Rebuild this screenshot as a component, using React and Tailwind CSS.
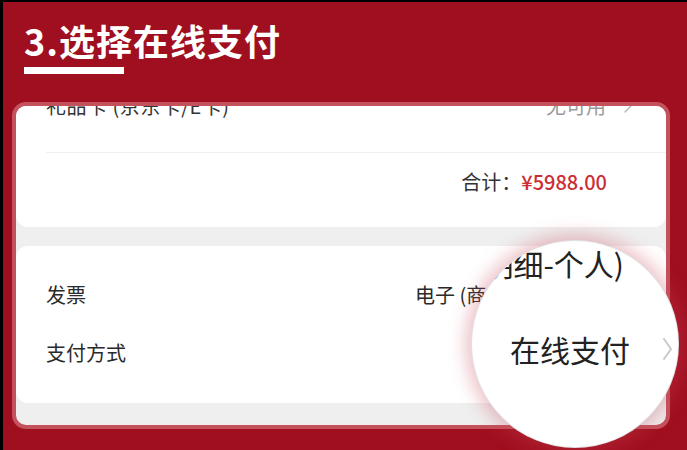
const Chevron = ({ className = '', w = 8, h = 14, color = '#bbbbbb', sw = 1.5 }) => (
    <svg width={w} height={h} viewBox={`0 0 ${w} ${h}`} className={className} fill="none">
        <polyline points={`1,1 ${w - 1},${h / 2} 1,${h - 1}`} stroke={color} strokeWidth={sw} strokeLinecap="round" strokeLinejoin="round" />
    </svg>
);

const App = () => {
    return (
        <div
            className="relative w-[687px] h-[450px] overflow-hidden bg-[#a00f1f] border-t-2 border-l-[3px] border-black"
            style={{ fontFamily: '"Noto Sans CJK SC", "Noto Sans", sans-serif' }}
        >
            <div className="pl-[21px] pt-[16px]">
                <h1 className="text-[36px] leading-[44px] font-bold text-white tracking-[1px]">3.选择在线支付</h1>
                <div className="mt-[5px] h-[7px] w-[100px] bg-white" />
            </div>

            <div className="mt-[28px] ml-[9px] w-[658px] h-[327px] border-4 border-[#c4525c] rounded-[14px] bg-[#efefef] overflow-hidden flex flex-col">
                <div className="h-[121px] bg-white rounded-b-[12px] shrink-0">
                    <div className="-mt-[20px] h-[40px] pl-[30px] pr-[34px] flex items-center justify-between text-[20px]">
                        <span className="text-[#333] tracking-[0.5px]">礼品卡 (京东卡/E卡)</span>
                        <span className="flex items-center gap-[18px] text-[#999]">
                            无可用
                            <Chevron />
                        </span>
                    </div>
                    <div className="mt-[26px] ml-[30px] h-px bg-[#f0f0f0]" />
                    <div className="h-[58px] pr-[59px] flex items-center justify-end text-[20px]">
                        <span className="text-[#333]">合计：</span>
                        <span className="text-[#cc2e35] font-medium">¥5988.00</span>
                    </div>
                </div>

                <div className="mt-[19px] h-[157px] bg-white rounded-[12px] shrink-0 pt-[20px] text-[20px] text-[#2a2a2a]">
                    <div className="h-[58px] pl-[30px] pr-[34px] flex items-center justify-between">
                        <span>发票</span>
                        <span className="flex items-center gap-[24px]">
                            电子 (商品明细-个人)
                            <Chevron />
                        </span>
                    </div>
                    <div className="h-[58px] pl-[30px] pr-[34px] flex items-center justify-between">
                        <span>支付方式</span>
                        <span className="flex items-center gap-[18px]">
                            在线支付
                            <Chevron />
                        </span>
                    </div>
                </div>
            </div>

            {/* magnifier */}
            <div className="absolute left-[469px] top-[239px] w-[206px] h-[206px] rounded-full bg-white overflow-hidden ring-1 ring-[#e2e2e2] shadow-[0_0_18px_6px_rgba(200,70,85,0.35)] text-[#222]">
                <div className="absolute right-[54px] top-[3px] h-[38px] flex items-center whitespace-nowrap text-[30px]">
                    电子 (商品明细-个人)
                </div>
                <div className="absolute right-[6px] top-[89px] h-[38px] flex items-center gap-[33px] whitespace-nowrap text-[30px]">
                    在线支付
                    <Chevron w={9} h={22} color="#c9c9c9" sw={2} />
                </div>
            </div>
        </div>
    );
};

export default App;
